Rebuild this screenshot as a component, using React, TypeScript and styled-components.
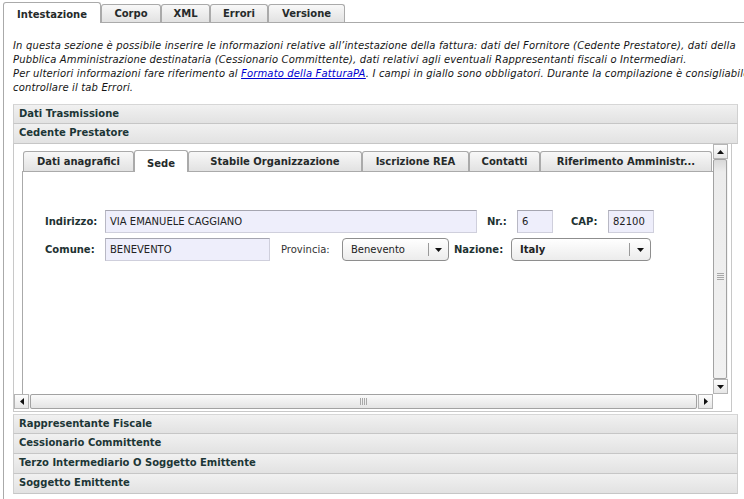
import React from "react";
import styled, { createGlobalStyle } from "styled-components";

const GlobalStyle = createGlobalStyle`
  html, body { margin: 0; padding: 0; background: #fff; }
  body {
    font-family: "DejaVu Sans", Verdana, sans-serif;
    font-size: 10px;
    color: #111;
  }
  #root { width: 744px; height: 499px; overflow: hidden; }
`;

const Page = styled.div`
  box-sizing: border-box;
  width: 744px;
  height: 499px;
  overflow: hidden;
  padding: 2px 0 0 3px;
  display: flex;
  flex-direction: column;
`;

const TabBar = styled.div`
  display: flex;
  align-items: flex-end;
  height: 20px;
  flex: none;
  border-bottom: 1px solid #aaaaaa;
`;

const TopTab = styled.div<{ $active?: boolean; $w: number }>`
  box-sizing: border-box;
  flex: none;
  width: ${(p) => p.$w}px;
  height: ${(p) => (p.$active ? 21 : 18)}px;
  margin-bottom: ${(p) => (p.$active ? -1 : 0)}px;
  padding-top: ${(p) => (p.$active ? 2 : 0)}px;
  display: flex;
  align-items: center;
  justify-content: center;
  border: 1px solid #aaaaaa;
  border-bottom: none;
  border-radius: 3px 3px 0 0;
  background: ${(p) => (p.$active ? "#fff" : "linear-gradient(#f8f8f8, #e2e2e2)")};
  font-weight: bold;
  color: #252a2a;
  white-space: nowrap;
`;

const Panel = styled.div`
  flex: 1;
  border-left: 1px solid #aaaaaa;
  padding: 16px 0 0 9px;
`;

const Intro = styled.p`
  margin: 0;
  width: 745px;
  font-style: italic;
  letter-spacing: 0.15px;
  line-height: 14px;
  color: #151515;
  a {
    color: #0000d0;
    text-decoration: underline;
  }
`;

const Accordion = styled.div`
  margin-top: 9px;
  width: 725px;
  display: flex;
  flex-direction: column;
`;

const AccHeader = styled.div<{ $first?: boolean }>`
  box-sizing: border-box;
  height: 20px;
  padding: 3px 0 0 5px;
  border: 1px solid #d0d0d0;
  border-top: ${(p) => (p.$first ? "1px solid #d6d6d6" : "none")};
  border-bottom-color: #c6c6c6;
  background: linear-gradient(#f1f1f1, #e2e2e2);
  font-weight: bold;
  color: #1c3636;
  white-space: nowrap;
`;

const AccContent = styled.div`
  box-sizing: border-box;
  width: 719px;
  height: 268px;
  margin-bottom: 2px;
  padding: 0 3px 2px 0;
  border: 1px solid #c8c8c8;
  border-top: none;
  display: grid;
  grid-template-columns: 699px 15px;
  grid-template-rows: 250px 15px;
`;

const ScrollArea = styled.div`
  overflow: hidden;
  padding: 6px 0 0 8px;
`;

const InnerTabs = styled.div`
  display: flex;
  align-items: flex-end;
  height: 21px;
  padding-left: 1px;
`;

const InnerTab = styled.div<{ $active?: boolean; $w: number }>`
  box-sizing: border-box;
  flex: none;
  width: ${(p) => p.$w}px;
  height: ${(p) => (p.$active ? 22 : 20)}px;
  margin-bottom: ${(p) => (p.$active ? -1 : 0)}px;
  padding-top: ${(p) => (p.$active ? 3 : 0)}px;
  display: flex;
  align-items: center;
  justify-content: center;
  border: 1px solid #aaaaaa;
  border-bottom: none;
  border-radius: 3px 3px 0 0;
  background: ${(p) => (p.$active ? "#fff" : "linear-gradient(#f8f8f8, #e2e2e2)")};
  font-weight: bold;
  color: #252a2a;
  white-space: nowrap;
`;

const TabPanel = styled.div`
  box-sizing: border-box;
  width: 720px;
  height: 400px;
  border: 1px solid #aaaaaa;
  padding: 38px 0 0 22px;
  display: flex;
  flex-direction: column;
  gap: 5px;
`;

const FormRow = styled.div`
  display: flex;
  align-items: center;
  height: 23px;
`;

const Label = styled.div<{ $w: number; $ml?: number; $plain?: boolean }>`
  flex: none;
  width: ${(p) => p.$w}px;
  margin-left: ${(p) => p.$ml ?? 0}px;
  font-weight: ${(p) => (p.$plain ? "normal" : "bold")};
  color: ${(p) => (p.$plain ? "#333" : "#1e3232")};
  white-space: nowrap;
`;

const Input = styled.div<{ $w: number }>`
  box-sizing: border-box;
  flex: none;
  width: ${(p) => p.$w}px;
  height: 23px;
  padding: 0 4px;
  display: flex;
  align-items: center;
  background: #eeeefb;
  border: 1px solid #cfcfdc;
  border-top-color: #a5a5b0;
  border-left-color: #b8b8c4;
  color: #222;
  white-space: nowrap;
`;

const Select = styled.div<{ $w: number; $ml?: number; $bold?: boolean }>`
  box-sizing: border-box;
  flex: none;
  width: ${(p) => p.$w}px;
  margin-left: ${(p) => p.$ml ?? 0}px;
  height: 23px;
  display: flex;
  align-items: center;
  border: 1px solid #8e8e8e;
  border-radius: 4px;
  background: linear-gradient(#ffffff, #ececec);
  font-weight: ${(p) => (p.$bold ? "bold" : "normal")};
  color: #222;
`;

const SelectText = styled.div`
  flex: 1;
  padding-left: 8px;
  white-space: nowrap;
`;

const SelectArrow = styled.div<{ $w: number }>`
  flex: none;
  width: ${(p) => p.$w}px;
  height: 13px;
  border-left: 1px solid #9a9a9a;
  display: flex;
  align-items: center;
  justify-content: center;
`;

const VScroll = styled.div`
  display: flex;
  flex-direction: column;
  background: #f3f3f3;
`;

const HScroll = styled.div`
  display: flex;
  background: #f3f3f3;
`;

const ScrollBtn = styled.div`
  box-sizing: border-box;
  flex: none;
  width: 15px;
  height: 15px;
  border: 1px solid #b4b4b4;
  background: linear-gradient(#fdfdfd, #e6e6e6);
  display: flex;
  align-items: center;
  justify-content: center;
`;

const VThumb = styled.div`
  box-sizing: border-box;
  flex: 1;
  margin: 0 1px 0 0;
  border: 1px solid #a2a2a2;
  border-radius: 2px;
  background: linear-gradient(#d8d8d8, #ececec 12px, #f1f1f1);
  display: flex;
  align-items: center;
  justify-content: center;
  padding-top: 16px;
`;

const HThumb = styled.div`
  box-sizing: border-box;
  flex: 1;
  margin: 0 1px;
  border: 1px solid #a2a2a2;
  border-radius: 2px;
  background: linear-gradient(#fafafa, #e4e4e4);
  display: flex;
  align-items: center;
  justify-content: center;
`;

const Grip = styled.div<{ $vertical?: boolean }>`
  width: ${(p) => (p.$vertical ? 7 : 8)}px;
  height: ${(p) => (p.$vertical ? 8 : 7)}px;
  background: ${(p) =>
    p.$vertical
      ? "repeating-linear-gradient(#a8a8a8 0 1px, transparent 1px 2px)"
      : "repeating-linear-gradient(90deg, #a8a8a8 0 1px, transparent 1px 2px)"};
`;

const Tri = ({ dir }: { dir: "up" | "down" | "left" | "right" }) => {
  const pts = {
    up: "0,4 7,4 3.5,0",
    down: "0,0 7,0 3.5,4",
    left: "4,0 4,7 0,3.5",
    right: "0,0 0,7 4,3.5",
  }[dir];
  const vert = dir === "up" || dir === "down";
  return (
    <svg width={vert ? 7 : 4} height={vert ? 4 : 7} viewBox={vert ? "0 0 7 4" : "0 0 4 7"}>
      <polygon points={pts} fill="#111" />
    </svg>
  );
};

const innerTabs: [string, number][] = [
  ["Dati anagrafici", 111],
  ["Sede", 54],
  ["Stabile Organizzazione", 174],
  ["Iscrizione REA", 107],
  ["Contatti", 71],
  ["Riferimento Amministr...", 172],
];

const topTabs: [string, number][] = [
  ["Intestazione", 98],
  ["Corpo", 60],
  ["XML", 49],
  ["Errori", 58],
  ["Versione", 77],
];

export default function App() {
  return (
    <>
      <GlobalStyle />
      <Page>
        <TabBar>
          {topTabs.map(([t, w], i) => (
            <TopTab key={t} $w={w} $active={i === 0}>
              {t}
            </TopTab>
          ))}
        </TabBar>
        <Panel>
          <Intro>
            In questa sezione è possibile inserire le informazioni relative all’intestazione della fattura: dati
            del Fornitore (Cedente Prestatore), dati della Pubblica Amministrazione destinataria (Cessionario
            Committente), dati relativi agli eventuali Rappresentanti fiscali o Intermediari.
            <br />
            Per ulteriori informazioni fare riferimento al <a href="#">Formato della FatturaPA</a>. I campi in
            giallo sono obbligatori. Durante la compilazione è consigliabile controllare il tab Errori.
          </Intro>
          <Accordion>
            <AccHeader $first>Dati Trasmissione</AccHeader>
            <AccHeader>Cedente Prestatore</AccHeader>
            <AccContent>
              <ScrollArea>
                <InnerTabs>
                  {innerTabs.map(([t, w], i) => (
                    <InnerTab key={t} $w={w} $active={i === 1}>
                      {t}
                    </InnerTab>
                  ))}
                </InnerTabs>
                <TabPanel>
                  <FormRow>
                    <Label $w={60}>Indirizzo:</Label>
                    <Input $w={372}>VIA EMANUELE CAGGIANO</Input>
                    <Label $w={30} $ml={10}>Nr.:</Label>
                    <Input $w={36}>6</Input>
                    <Label $w={37} $ml={18}>CAP:</Label>
                    <Input $w={46}>82100</Input>
                  </FormRow>
                  <FormRow>
                    <Label $w={60}>Comune:</Label>
                    <Input $w={165}>BENEVENTO</Input>
                    <Label $w={61} $ml={11} $plain>
                      Provincia:
                    </Label>
                    <Select $w={107}>
                      <SelectText>Benevento</SelectText>
                      <SelectArrow $w={19}>
                        <Tri dir="down" />
                      </SelectArrow>
                    </Select>
                    <Label $w={57} $ml={5}>Nazione:</Label>
                    <Select $w={140} $bold>
                      <SelectText>Italy</SelectText>
                      <SelectArrow $w={20}>
                        <Tri dir="down" />
                      </SelectArrow>
                    </Select>
                  </FormRow>
                </TabPanel>
              </ScrollArea>
              <VScroll>
                <ScrollBtn>
                  <Tri dir="up" />
                </ScrollBtn>
                <VThumb>
                  <Grip $vertical />
                </VThumb>
                <ScrollBtn>
                  <Tri dir="down" />
                </ScrollBtn>
              </VScroll>
              <HScroll>
                <ScrollBtn>
                  <Tri dir="left" />
                </ScrollBtn>
                <HThumb>
                  <Grip />
                </HThumb>
                <ScrollBtn>
                  <Tri dir="right" />
                </ScrollBtn>
              </HScroll>
            </AccContent>
            <AccHeader $first>Rappresentante Fiscale</AccHeader>
            <AccHeader>Cessionario Committente</AccHeader>
            <AccHeader>Terzo Intermediario O Soggetto Emittente</AccHeader>
            <AccHeader>Soggetto Emittente</AccHeader>
          </Accordion>
        </Panel>
      </Page>
    </>
  );
}
